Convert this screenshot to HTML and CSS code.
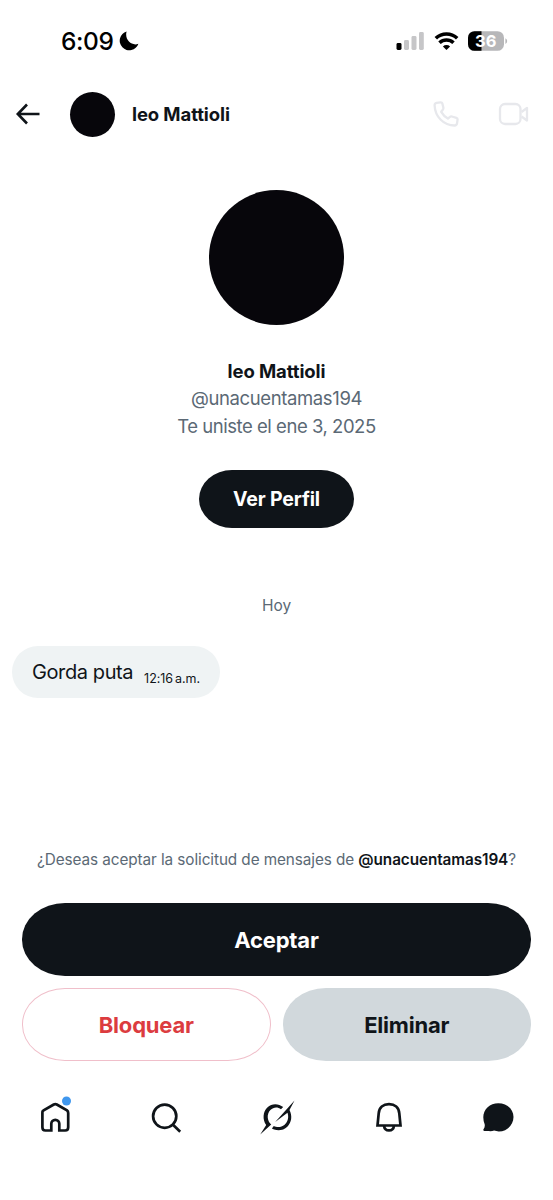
FILE: index.html
```html
<!DOCTYPE html>
<html lang="es">
<head>
<meta charset="utf-8">
<meta name="viewport" content="width=device-width, initial-scale=1">
<title>Solicitud de mensajes</title>
<link rel="stylesheet" href="styles.css">
</head>
<body>
<div class="screen">
  <div class="status">
    <span class="clock">6:09</span>
    <svg class="moon" width="20" height="20" viewBox="0 0 20 20"><path d="M7.600 .5A9.600 9.600 0 1 0 19.400 12.800C13 15.500 5.200 9 7.600 .5Z"/></svg>
    <svg class="signals" width="112" height="24" viewBox="0 0 112 24">
      <g fill="#c6c6c8"><rect x="8" y="11" width="5" height="10" rx="1.4"/><rect x="15.500" y="7" width="5" height="14" rx="1.4"/><rect x="23" y="3" width="4.800" height="18" rx="1.400"/></g>
      <rect x="0.500" y="14" width="5" height="7" rx="1.400"/>
      <g fill="none" stroke="#000" stroke-width="3.600"><path d="M39.800 9.200a15.600 15.600 0 0 1 21.400 0"/><path d="M43.500 13.700a10.300 10.300 0 0 1 14 0"/></g>
      <path d="M46.900 17.400a5.300 5.300 0 0 1 7.200 0L50.500 21Z"/>
      <rect x="72" y="2.200" width="36" height="19.600" rx="6.500" fill="#b7b7b9"/>
      <path d="M85.500 2.200H78.500A6.500 6.500 0 0 0 72 8.700V15.300A6.500 6.500 0 0 0 78.500 21.800H85.500Z"/>
      <path d="M109.400 9.200q1.800 1 1.800 2.900t-1.800 2.900Z" fill="#b7b7b9"/>
      <text class="charge" x="89.800" y="18.100" text-anchor="middle">36</text>
    </svg>
  </div>

  <header class="header">
    <svg class="back" width="26" height="24" viewBox="0 0 26 24"><path d="M12 2.500 2.800 12 12 21.500M3 12H24.500" fill="none" stroke="#0f1419" stroke-width="2.600"/></svg>
    <span class="avatar avatar-small"></span>
    <span class="name header-name">leo Mattioli</span>
    <svg class="call" width="28" height="28" viewBox="0 0 28 28"><path d="M4.500 2.800 8.500 2.300Q10 2.200 10.300 3.400L11.400 7.800Q11.600 8.900 10.800 9.700L9.200 11.800Q11.800 16.200 15.900 18.600L18 16.900Q18.800 16.200 19.800 16.500L24.400 17.800Q25.600 18.200 25.600 19.400L25 23.600Q24.600 25.600 22.500 25.500C12 25.500 3 17 2.600 5.200Q2.600 3.200 4.500 2.800Z"/></svg>
    <svg class="call" width="32" height="26" viewBox="0 0 32 26"><rect x="2" y="3" width="20.500" height="20" rx="5"/><path d="M23.500 11 29 7V19.500L23.500 15.500"/></svg>
  </header>

  <section class="profile">
    <span class="avatar avatar-large"></span>
    <span class="name profile-name">leo Mattioli</span>
    <span class="handle">@unacuentamas194</span>
    <span class="joined">Te uniste el ene 3, 2025</span>
    <a class="view">Ver Perfil</a>
  </section>

  <main class="messages">
    <div class="day">Hoy</div>
    <div class="bubble"><span class="message">Gorda puta</span><span class="time">12:16<span class="ampm">a.m.</span></span></div>
  </main>

  <section class="request">
    <p class="question">¿Deseas aceptar la solicitud de mensajes de <span class="mention">@unacuentamas194</span>?</p>
    <div class="buttons">
      <a class="button accept">Aceptar</a>
      <a class="button block">Bloquear</a>
      <a class="button delete">Eliminar</a>
    </div>
  </section>

  <nav class="tabs">
    <svg width="40" height="40" viewBox="0 0 40 40"><path d="M7.600 14.200Q7.400 14.800 7.400 16V30.300Q7.400 33.500 10.400 33.500H16.300V26.800A4 4 0 0 1 24.300 26.800V33.500H30.200Q33.200 33.500 33.200 30.300V16Q33.200 14.300 32 13.400L21.800 7.500Q20.300 6.700 18.800 7.500L8.600 13.400Z"/><circle class="unread" cx="31.500" cy="4" r="4.500"/></svg>
    <svg width="40" height="40" viewBox="0 0 40 40"><circle cx="18.700" cy="19.200" r="11.600"/><path d="M27 27.700 34.200 34.700"/></svg>
    <svg width="40" height="40" viewBox="0 0 40 40"><path class="solid" d="M26.200 10.100C21.500 6 14.500 6.300 10.600 10.200C5.800 14.500 5.300 22.500 9.200 28.100L3.200 37.400 14.200 27.600C10 23.500 9.500 17 13.400 13C16.500 10 20.500 9.500 24 12.300ZM37.500 3.400 18.200 24.900 30.500 15.700C32 20 31 24.800 27.600 27.700C24 30.800 19.600 30.500 16.800 28.900L14.900 31.500C19.500 34.200 26.200 33.800 30.300 29.700C34.700 25.300 35.500 19 32.500 13Z"/></svg>
    <svg class="bell" width="40" height="40" viewBox="0 0 40 40"><path d="M8.500 28.500H31.500L30.300 16.400C29.800 10.500 25.800 7.200 20 7.200S10.200 10.500 9.700 16.400ZM15 28.800Q15.600 33.400 20 33.400T25 28.800"/></svg>
    <svg width="40" height="40" viewBox="0 0 40 40"><path class="solid" d="M20.300 6.200C28.900 6.200 35.500 12.200 35.500 20.100S29 34.400 20.800 34.400Q18.300 34.400 16.100 33.600Q14.100 34.300 10.900 34.100L6.300 33.900Q4.700 33.400 5.500 32.200Q7.300 30 6.600 27Q5.300 23.500 5.300 20.200C5.300 12.300 12 6.200 20.300 6.200Z"/></svg>
  </nav>
</div>
</body>
</html>
```
FILE: styles.css
```css
* { box-sizing: border-box; }
body { margin: 0; background: #fff; font-family: Inter, "Liberation Sans", sans-serif; color: #0f1419; }
.screen { width: 553px; height: 1200px; display: flex; flex-direction: column; white-space: nowrap; overflow: hidden; }
.status { height: 82px; display: flex; align-items: center; padding: 0 45px 0 61px; flex: none; }
.clock { font-size: 24.500px; font-weight: 500; letter-spacing: -0.4px; color: #000; width: 57px; }
.moon { margin-left: 1px; }
.signals { margin-left: auto; }
.charge { font-size: 16.500px; font-weight: 700; fill: #fff; }
.header { height: 64px; display: flex; align-items: center; padding: 0 23px 0 15px; flex: none; }
.back { margin-right: 29px; }
.avatar { display: block; flex: none; border-radius: 50%; background: #07060b; }
.avatar-small { width: 45px; height: 45px; margin-right: 17px; }
.name { font-weight: 700; letter-spacing: -0.1px; }
.header-name { font-size: 18.500px; }
.call { fill: none; stroke: #e7e8ec; stroke-width: 2.300px; stroke-linejoin: round; margin-left: 38px; }
.header-name + .call { margin-left: auto; }
.profile { display: flex; flex-direction: column; align-items: center; padding-top: 44px; font-size: 18.500px; line-height: 28px; color: #5b6975; }
.avatar-large { width: 135px; height: 135px; margin-bottom: 32px; }
.profile-name { color: #0f1419; font-size: 18.500px; }
.handle { letter-spacing: -0.38px; margin-top: -1px; }
.joined { letter-spacing: -0.47px; }
.view { width: 155px; height: 58px; margin-top: 30px; border-radius: 33px / 29px; background: #0f1419; color: #fff; font-size: 19.500px; font-weight: 700; line-height: 58px; text-align: center; letter-spacing: -0.15px; }
.messages { padding: 67px 12px 0; display: flex; flex-direction: column; align-items: flex-start; }
.day { align-self: center; font-size: 15.500px; line-height: 22px; color: #5b6975; }
.bubble { height: 52px; margin-top: 29px; padding: 0 20px; border-radius: 26px; background: #eff3f4; display: flex; width: 208px; justify-content: space-between; line-height: 53px; }
.message { font-size: 20px; letter-spacing: -0.4px; }
.time { font-size: 12.500px; line-height: 65px; letter-spacing: -0.050px; }
.ampm { margin-left: 2px; }
.request { padding: 150px 22px 0; }
.question { margin: 0; font-size: 15.300px; line-height: 24px; text-align: center; color: #5b6975; letter-spacing: -0.080px; }
.mention { color: #0f1419; font-weight: 600; }
.buttons { margin-top: 31px; display: grid; grid-template-columns: 1fr 1fr; gap: 12px; }
.button { height: 73px; display: flex; align-items: center; justify-content: center; border-radius: 43px / 36px; font-size: 22px; font-weight: 700; letter-spacing: -0.2px; }
.accept { grid-column: 1 / 3; background: #0f1419; color: #fff; }
.block { border: 1px solid #f0bfca; color: #dc3c3f; }
.delete { background: #d1d8dc; }
.tabs { display: flex; justify-content: space-between; padding: 36px 35px 0; }
.tabs svg { fill: none; stroke: #0f1419; stroke-width: 2.700px; overflow: visible; }
.tabs .bell { margin: 0 -1.500px 0 1.500px; }
.tabs .solid { fill: #0f1419; stroke: none; }
.tabs .unread { fill: #3f97ee; stroke: none; }
```
